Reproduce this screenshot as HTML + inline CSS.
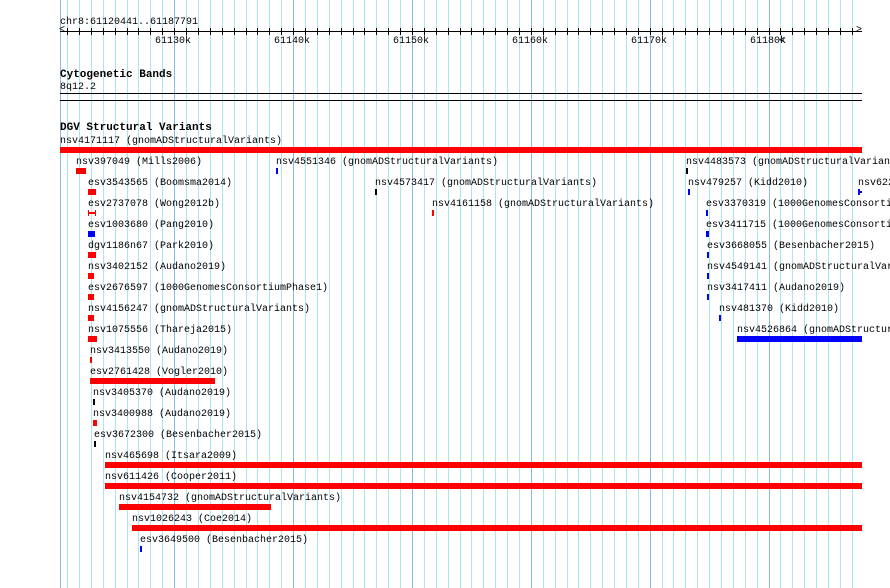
<!DOCTYPE html>
<html><head><meta charset="utf-8"><style>
html,body{margin:0;padding:0;background:#fff;width:890px;height:588px;overflow:hidden;font-family:"Liberation Mono",monospace;font-size:10px;color:#000}
#w{position:relative;width:890px;height:588px;overflow:hidden}
.g{position:absolute;top:0;height:588px;width:1px;background:#aee4ee}
.G{position:absolute;top:0;height:588px;width:1px;background:#88b8e4}
.t{position:absolute;white-space:nowrap;line-height:12px;margin-top:2px}
.b{position:absolute;height:6px}
.r{background:#f00}.u{background:#00f}.k{background:#000}
.tk{position:absolute;top:28px;height:7px;width:1px;background:#000}
.h{position:absolute;left:60px;width:802px;height:1px;background:#000}
.bt{font-weight:bold;font-size:11px}
</style></head><body><div id="w">
<div class="G" style="left:60px"></div>
<div class="g" style="left:67px"></div><div class="g" style="left:79px"></div><div class="g" style="left:91px"></div><div class="g" style="left:103px"></div><div class="g" style="left:115px"></div><div class="g" style="left:127px"></div><div class="g" style="left:138px"></div><div class="g" style="left:150px"></div><div class="g" style="left:162px"></div><div class="G" style="left:174px"></div>
<div class="g" style="left:186px"></div><div class="g" style="left:198px"></div><div class="g" style="left:210px"></div><div class="g" style="left:222px"></div><div class="g" style="left:234px"></div><div class="g" style="left:246px"></div><div class="g" style="left:257px"></div><div class="g" style="left:269px"></div><div class="g" style="left:281px"></div><div class="G" style="left:293px"></div>
<div class="g" style="left:305px"></div><div class="g" style="left:317px"></div><div class="g" style="left:329px"></div><div class="g" style="left:341px"></div><div class="g" style="left:353px"></div><div class="g" style="left:364px"></div><div class="g" style="left:376px"></div><div class="g" style="left:388px"></div><div class="g" style="left:400px"></div><div class="G" style="left:412px"></div>
<div class="g" style="left:424px"></div><div class="g" style="left:436px"></div><div class="g" style="left:448px"></div><div class="g" style="left:460px"></div><div class="g" style="left:471px"></div><div class="g" style="left:483px"></div><div class="g" style="left:495px"></div><div class="g" style="left:507px"></div><div class="g" style="left:519px"></div><div class="G" style="left:531px"></div>
<div class="g" style="left:543px"></div><div class="g" style="left:555px"></div><div class="g" style="left:567px"></div><div class="g" style="left:578px"></div><div class="g" style="left:590px"></div><div class="g" style="left:602px"></div><div class="g" style="left:614px"></div><div class="g" style="left:626px"></div><div class="g" style="left:638px"></div><div class="G" style="left:650px"></div>
<div class="g" style="left:662px"></div><div class="g" style="left:673px"></div><div class="g" style="left:685px"></div><div class="g" style="left:697px"></div><div class="g" style="left:709px"></div><div class="g" style="left:721px"></div><div class="g" style="left:733px"></div><div class="g" style="left:745px"></div><div class="g" style="left:757px"></div><div class="G" style="left:769px"></div>
<div class="g" style="left:780px"></div><div class="g" style="left:792px"></div><div class="g" style="left:804px"></div><div class="g" style="left:816px"></div><div class="g" style="left:828px"></div><div class="g" style="left:840px"></div><div class="g" style="left:852px"></div>

<div class="t" style="left:60px;top:15px">chr8:61120441..61187791</div>
<div class="h" style="top:31px"></div>
<div class="t" style="left:59px;top:23px">&lt;</div>
<div class="t" style="left:856px;top:23px">&gt;</div>
<div class="tk" style="left:67px"></div><div class="tk" style="left:79px"></div><div class="tk" style="left:91px"></div><div class="tk" style="left:103px"></div><div class="tk" style="left:115px"></div><div class="tk" style="left:127px"></div><div class="tk" style="left:138px"></div><div class="tk" style="left:150px"></div><div class="tk" style="left:162px"></div><div class="tk" style="left:174px"></div><div class="tk" style="left:186px"></div><div class="tk" style="left:198px"></div><div class="tk" style="left:210px"></div><div class="tk" style="left:222px"></div><div class="tk" style="left:234px"></div><div class="tk" style="left:246px"></div><div class="tk" style="left:257px"></div><div class="tk" style="left:269px"></div><div class="tk" style="left:281px"></div><div class="tk" style="left:293px"></div><div class="tk" style="left:305px"></div><div class="tk" style="left:317px"></div><div class="tk" style="left:329px"></div><div class="tk" style="left:341px"></div><div class="tk" style="left:353px"></div><div class="tk" style="left:364px"></div><div class="tk" style="left:376px"></div><div class="tk" style="left:388px"></div><div class="tk" style="left:400px"></div><div class="tk" style="left:412px"></div><div class="tk" style="left:424px"></div><div class="tk" style="left:436px"></div><div class="tk" style="left:448px"></div><div class="tk" style="left:460px"></div><div class="tk" style="left:471px"></div><div class="tk" style="left:483px"></div><div class="tk" style="left:495px"></div><div class="tk" style="left:507px"></div><div class="tk" style="left:519px"></div><div class="tk" style="left:531px"></div><div class="tk" style="left:543px"></div><div class="tk" style="left:555px"></div><div class="tk" style="left:567px"></div><div class="tk" style="left:578px"></div><div class="tk" style="left:590px"></div><div class="tk" style="left:602px"></div><div class="tk" style="left:614px"></div><div class="tk" style="left:626px"></div><div class="tk" style="left:638px"></div><div class="tk" style="left:650px"></div><div class="tk" style="left:662px"></div><div class="tk" style="left:673px"></div><div class="tk" style="left:685px"></div><div class="tk" style="left:697px"></div><div class="tk" style="left:709px"></div><div class="tk" style="left:721px"></div><div class="tk" style="left:733px"></div><div class="tk" style="left:745px"></div><div class="tk" style="left:757px"></div><div class="tk" style="left:769px"></div><div class="tk" style="left:780px"></div><div class="tk" style="left:792px"></div><div class="tk" style="left:804px"></div><div class="tk" style="left:816px"></div><div class="tk" style="left:828px"></div><div class="tk" style="left:840px"></div><div class="tk" style="left:852px"></div>
<div class="t" style="left:155px;top:34px">61130k</div>
<div class="t" style="left:274px;top:34px">61140k</div>
<div class="t" style="left:393px;top:34px">61150k</div>
<div class="t" style="left:512px;top:34px">61160k</div>
<div class="t" style="left:631px;top:34px">61170k</div>
<div class="t" style="left:750px;top:34px">61180k</div>
<div class="t" style="left:779px;top:34px">&lt;</div>

<div class="t bt" style="left:60px;top:67px">Cytogenetic Bands</div>
<div class="t" style="left:60px;top:80px">8q12.2</div>
<div class="h" style="top:93px"></div>
<div class="h" style="top:100px"></div>
<div class="t bt" style="left:60px;top:120px">DGV Structural Variants</div>

<div class="t" style="left:60px;top:134px">nsv4171117 (gnomADStructuralVariants)</div><div class="b r" style="left:60px;top:147px;width:802px"></div>

<div class="t" style="left:76px;top:155px">nsv397049 (Mills2006)</div><div class="b r" style="left:76px;top:168px;width:10px"></div>
<div class="t" style="left:276px;top:155px">nsv4551346 (gnomADStructuralVariants)</div><div class="b u" style="left:276px;top:168px;width:2px"></div>
<div class="t" style="left:686px;top:155px">nsv4483573 (gnomADStructuralVariants)</div><div class="b k" style="left:686px;top:168px;width:2px"></div>

<div class="t" style="left:88px;top:176px">esv3543565 (Boomsma2014)</div><div class="b r" style="left:88px;top:189px;width:8px"></div>
<div class="t" style="left:375px;top:176px">nsv4573417 (gnomADStructuralVariants)</div><div class="b k" style="left:375px;top:189px;width:2px"></div>
<div class="t" style="left:688px;top:176px">nsv479257 (Kidd2010)</div><div class="b u" style="left:688px;top:189px;width:2px"></div>
<div class="t" style="left:858px;top:176px">nsv622</div><div class="b u" style="left:858px;top:189px;width:2px"></div><div class="b u" style="left:858px;top:191px;width:4px;height:2px"></div>

<div class="t" style="left:88px;top:197px">esv2737078 (Wong2012b)</div><div class="b r" style="left:88px;top:210px;width:1px"></div><div class="b r" style="left:95px;top:210px;width:1px"></div><div class="b r" style="left:88px;top:212px;width:8px;height:2px"></div>
<div class="t" style="left:432px;top:197px">nsv4161158 (gnomADStructuralVariants)</div><div class="b r" style="left:432px;top:210px;width:2px"></div>
<div class="t" style="left:706px;top:197px">esv3370319 (1000GenomesConsortiumPhase3)</div><div class="b u" style="left:706px;top:210px;width:2px"></div>

<div class="t" style="left:88px;top:218px">esv1003680 (Pang2010)</div><div class="b u" style="left:88px;top:231px;width:7px"></div>
<div class="t" style="left:706px;top:218px">esv3411715 (1000GenomesConsortiumPhase3)</div><div class="b u" style="left:706px;top:231px;width:3px"></div>

<div class="t" style="left:88px;top:239px">dgv1186n67 (Park2010)</div><div class="b r" style="left:88px;top:252px;width:8px"></div>
<div class="t" style="left:707px;top:239px">esv3668055 (Besenbacher2015)</div><div class="b u" style="left:707px;top:252px;width:2px"></div>

<div class="t" style="left:88px;top:260px">nsv3402152 (Audano2019)</div><div class="b r" style="left:88px;top:273px;width:6px"></div>
<div class="t" style="left:707px;top:260px">nsv4549141 (gnomADStructuralVariants)</div><div class="b u" style="left:707px;top:273px;width:2px"></div>

<div class="t" style="left:88px;top:281px">esv2676597 (1000GenomesConsortiumPhase1)</div><div class="b r" style="left:88px;top:294px;width:6px"></div>
<div class="t" style="left:707px;top:281px">nsv3417411 (Audano2019)</div><div class="b u" style="left:707px;top:294px;width:2px"></div>

<div class="t" style="left:88px;top:302px">nsv4156247 (gnomADStructuralVariants)</div><div class="b r" style="left:88px;top:315px;width:6px"></div>
<div class="t" style="left:719px;top:302px">nsv481370 (Kidd2010)</div><div class="b u" style="left:719px;top:315px;width:2px"></div>

<div class="t" style="left:88px;top:323px">nsv1075556 (Thareja2015)</div><div class="b r" style="left:88px;top:336px;width:9px"></div>
<div class="t" style="left:737px;top:323px">nsv4526864 (gnomADStructuralVariants)</div><div class="b u" style="left:737px;top:336px;width:125px"></div>

<div class="t" style="left:90px;top:344px">nsv3413550 (Audano2019)</div><div class="b r" style="left:90px;top:357px;width:2px"></div>
<div class="t" style="left:90px;top:365px">esv2761428 (Vogler2010)</div><div class="b r" style="left:90px;top:378px;width:125px"></div>
<div class="t" style="left:93px;top:386px">nsv3405370 (Audano2019)</div><div class="b k" style="left:93px;top:399px;width:2px"></div>
<div class="t" style="left:93px;top:407px">nsv3400988 (Audano2019)</div><div class="b r" style="left:93px;top:420px;width:4px"></div>
<div class="t" style="left:94px;top:428px">esv3672300 (Besenbacher2015)</div><div class="b k" style="left:94px;top:441px;width:2px"></div>
<div class="t" style="left:105px;top:449px">nsv465698 (Itsara2009)</div><div class="b r" style="left:105px;top:462px;width:757px"></div>
<div class="t" style="left:105px;top:470px">nsv611426 (Cooper2011)</div><div class="b r" style="left:105px;top:483px;width:757px"></div>
<div class="t" style="left:119px;top:491px">nsv4154732 (gnomADStructuralVariants)</div><div class="b r" style="left:119px;top:504px;width:152px"></div>
<div class="t" style="left:132px;top:512px">nsv1026243 (Coe2014)</div><div class="b r" style="left:132px;top:525px;width:730px"></div>
<div class="t" style="left:140px;top:533px">esv3649500 (Besenbacher2015)</div><div class="b u" style="left:140px;top:546px;width:2px"></div>
</div></body></html>
